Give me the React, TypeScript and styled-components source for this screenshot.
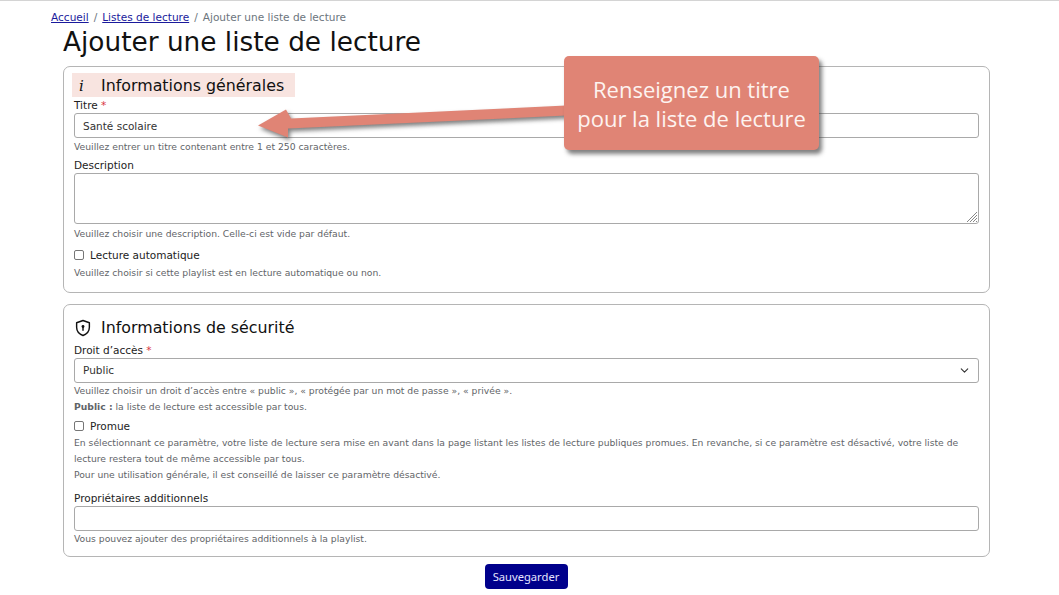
import React from "react";
import styled, { createGlobalStyle } from "styled-components";
import { ChevronDown } from "lucide-react";

const GlobalStyle = createGlobalStyle`
  html, body {
    margin: 0;
    padding: 0;
    background: #fff;
    font-family: "DejaVu Sans", Verdana, sans-serif;
    color: #212529;
  }
`;

const Page = styled.div`
  position: relative;
  width: 1059px;
  height: 595px;
  overflow: hidden;
  border-top: 1px solid #d4d4d4;
  box-sizing: border-box;
`;

const Breadcrumb = styled.nav`
  margin: 10px 0 0 51px;
  height: 13px;
  line-height: 13px;
  font-size: 10.55px;
  color: #6c757d;
  display: flex;
  gap: 5px;

  a {
    color: #1a1a9c;
    text-decoration: underline;
  }
`;

const Title = styled.h1`
  margin: 2px 0 0 63px;
  height: 34px;
  line-height: 33px;
  font-size: 26.35px;
  font-weight: 400;
  color: #111;
`;

const Form = styled.form`
  margin: 6px 69px 0 63px;
  display: flex;
  flex-direction: column;
  gap: 11px;
`;

const Card = styled.section<{ $height: number }>`
  box-sizing: border-box;
  height: ${(p) => p.$height}px;
  border: 1px solid #b5b5b5;
  border-radius: 7px;
  padding: 6px 10px 0;
`;

const SectionTitle = styled.h2<{ $shaded?: boolean; $top?: number }>`
  box-sizing: border-box;
  margin: ${(p) => p.$top ?? 0}px 0 0 -2px;
  display: inline-flex;
  align-items: center;
  height: 24px;
  padding: 1px 11px 0 2px;
  font-size: 15.85px;
  font-weight: 400;
  color: #111;
  background: ${(p) => (p.$shaded ? "#f8e4e0" : "transparent")};
`;

const TitleIcon = styled.span`
  width: 27px;
  display: inline-flex;
  justify-content: flex-start;
  padding-left: 5px;
  box-sizing: border-box;
  font-family: "DejaVu Serif", "Liberation Serif", serif;
  font-style: italic;
  font-size: 15px;
`;

const ShieldIcon = styled.svg`
  margin-left: -5px;
`;

const Label = styled.label<{ $top?: number; $drop?: number; $height?: number }>`
  box-sizing: border-box;
  display: block;
  margin-top: ${(p) => p.$top ?? 0}px;
  height: ${(p) => p.$height ?? 15}px;
  padding-top: ${(p) => p.$drop ?? 1}px;
  line-height: 15px;
  font-size: 10.5px;
  color: #222;

  b {
    color: #d9363e;
    font-weight: 400;
  }
`;

const TextBox = styled.div<{ $height?: number }>`
  position: relative;
  box-sizing: border-box;
  height: ${(p) => p.$height ?? 25}px;
  margin-top: 1px;
  padding: 0 8px;
  border: 1px solid #a9a9a9;
  border-radius: 3px;
  display: flex;
  align-items: center;
  justify-content: space-between;
  font-size: 10.5px;
  color: #333;
`;

const Grip = styled.svg`
  position: absolute;
  right: 0;
  bottom: 0;
`;

const Help = styled.p<{ $top?: number }>`
  margin: ${(p) => p.$top ?? 0}px 0 0;
  line-height: 16px;
  font-size: 9.22px;
  color: #5f6468;

  strong {
    font-weight: 700;
  }
`;

const CheckRow = styled.label<{ $top: number }>`
  display: flex;
  align-items: center;
  gap: 6px;
  height: 16px;
  margin-top: ${(p) => p.$top}px;
  font-size: 10.5px;
  color: #222;
`;

const Box = styled.span`
  box-sizing: border-box;
  width: 10px;
  height: 10px;
  border: 1px solid #767676;
  border-radius: 2px;
`;

const Actions = styled.div`
  display: flex;
  justify-content: center;
  margin-top: -4px;
  padding-right: 1px;
`;

const SaveButton = styled.button`
  width: 83px;
  height: 25px;
  padding: 0;
  border: none;
  border-radius: 4px;
  background: #00008b;
  color: #e6e6ff;
  font-family: "Noto Sans", "Open Sans", sans-serif;
  font-size: 11.2px;
`;

const Callout = styled.div`
  position: absolute;
  left: 564px;
  top: 55px;
  width: 255px;
  height: 94px;
  padding-top: 1px;
  box-sizing: border-box;
  background: #e08475;
  border-radius: 5px;
  box-shadow: 3px 4px 4px rgba(60, 60, 60, 0.65);
  display: flex;
  flex-direction: column;
  align-items: center;
  justify-content: center;
  color: #fdf3f0;
  font-family: "Open Sans", "Noto Sans", sans-serif;
  font-size: 22px;
  font-weight: 500;
  line-height: 29px;
`;

const Arrow = styled.svg`
  position: absolute;
  left: 250px;
  top: 100px;
  overflow: visible;
  filter: drop-shadow(2px 3px 2px rgba(60, 60, 60, 0.65));
`;

function App() {
  return (
    <Page>
      <GlobalStyle />
      <Breadcrumb>
        <a href="#accueil">Accueil</a>
        <span>/</span>
        <a href="#listes">Listes de lecture</a>
        <span>/</span>
        <span>Ajouter une liste de lecture</span>
      </Breadcrumb>
      <Title>Ajouter une liste de lecture</Title>
      <Form>
        <Card $height={227}>
          <SectionTitle $shaded>
            <TitleIcon>i</TitleIcon>
            Informations générales
          </SectionTitle>
          <Label>
            Titre <b>*</b>
          </Label>
          <TextBox>Santé scolaire</TextBox>
          <Help $top={1}>Veuillez entrer un titre contenant entre 1 et 250 caractères.</Help>
          <Label $top={2}>Description</Label>
          <TextBox $height={51}>
            <Grip width="12" height="12" viewBox="0 0 12 12">
              <path d="M1 11 11 1M4 11l7-7M7 11l4-4M10 11l1-1" stroke="#888" strokeWidth="1" fill="none" />
            </Grip>
          </TextBox>
          <Help $top={2}>Veuillez choisir une description. Celle-ci est vide par défaut.</Help>
          <CheckRow $top={5}>
            <Box />
            Lecture automatique
          </CheckRow>
          <Help $top={2}>Veuillez choisir si cette playlist est en lecture automatique ou non.</Help>
        </Card>
        <Card $height={253}>
          <SectionTitle $top={4}>
            <TitleIcon>
              <ShieldIcon width="18" height="18" viewBox="0 0 24 24" fill="none" stroke="#111" strokeWidth="1.9" strokeLinejoin="round">
                <path d="M12 2 20.500 5V11c0 5.200-3.400 9-8.500 11C6.900 20 3.500 16.200 3.500 11V5Z" />
                <circle cx="12" cy="10" r="1.900" fill="#111" stroke="none" />
                <path d="M12 11v4" strokeLinecap="round" />
              </ShieldIcon>
            </TitleIcon>
            Informations de sécurité
          </SectionTitle>
          <Label $drop={2} $height={16}>
            Droit d’accès <b>*</b>
          </Label>
          <TextBox>
            Public
            <ChevronDown size={13} color="#333" style={{ marginRight: -1 }} />
          </TextBox>
          <Help>Veuillez choisir un droit d’accès entre « public », « protégée par un mot de passe », « privée ».</Help>
          <Help>
            <strong>Public :</strong> la liste de lecture est accessible par tous.
          </Help>
          <CheckRow $top={3}>
            <Box />
            Promue
          </CheckRow>
          <Help $top={1}>
            En sélectionnant ce paramètre, votre liste de lecture sera mise en avant dans la page listant les listes de lecture publiques promues. En revanche, si ce paramètre est désactivé, votre liste de lecture restera tout de même accessible par tous.
          </Help>
          <Help>Pour une utilisation générale, il est conseillé de laisser ce paramètre désactivé.</Help>
          <Label $top={7}>Propriétaires additionnels</Label>
          <TextBox />
          <Help>Vous pouvez ajouter des propriétaires additionnels à la playlist.</Help>
        </Card>
        <Actions>
          <SaveButton type="button">Sauvegarder</SaveButton>
        </Actions>
      </Form>
      <Arrow width="320" height="50" viewBox="0 0 320 50">
        <path d="M8 24.500 36 8.500 41 17.500 316 4.500 316 14.500 38 27.500 38 36.500Z" fill="#e08475" />
      </Arrow>
      <Callout>
        <span>Renseignez un titre</span>
        <span>pour la liste de lecture</span>
      </Callout>
    </Page>
  );
}

export default App;
